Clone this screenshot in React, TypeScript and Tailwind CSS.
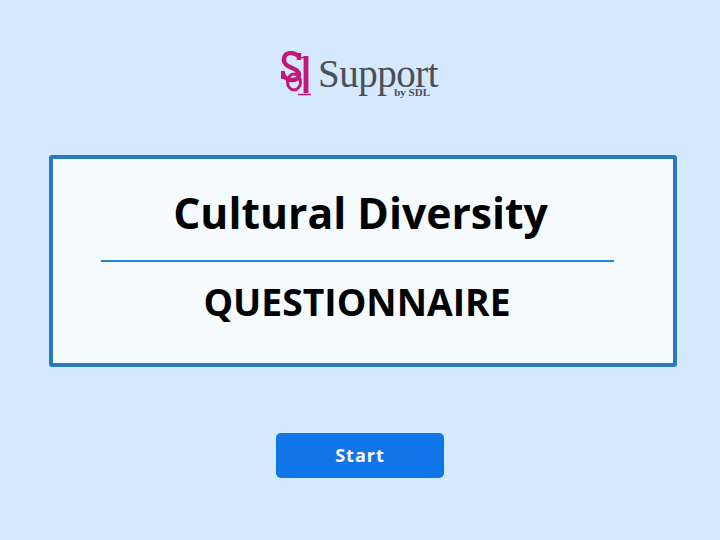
function Logo() {
  return (
    <div className="flex items-start h-[46px] w-[158px]" style={{fontFamily: '"Liberation Serif", serif'}}>
      <svg width="32" height="46" viewBox="0 0 32 46" className="shrink-0 text-[#c2187a]" fill="none" stroke="currentColor">
        <path d="M18 9 L18 2 M18 6 C14 1 4 0 3 8 C2 15 11 16 15 19 C20 23 19 29 11 29 C6 29 2 26 1.5 20 M1.5 28 L1.5 20" strokeWidth="4.4" />
        <ellipse cx="13" cy="31" rx="6.5" ry="8" strokeWidth="3" />
        <path d="M25 5 L25 42" strokeWidth="4.8" />
        <path d="M19 7 L25 6 M17 43.5 L30 43.5" strokeWidth="1.6" />
      </svg>
      <div className="flex flex-col items-end ml-[5px] text-[#4b4f57]">
        <span className="text-[39px] leading-[30px] tracking-[-0.5px] mt-[8px]">Support</span>
        <span className="text-[11px] leading-[10px] font-bold mt-[-2px] mr-[8px]">by SDL</span>
      </div>
    </div>
  );
}

export default function App() {
  return (
    <div
      className="w-[720px] h-[540px] bg-[#d4e8fe] flex flex-col items-center pt-[51px]"
      style={{fontFamily: '"Open Sans", sans-serif'}}
    >
      <Logo />
      <div className="mt-[58px] self-start ml-[49px] w-[628px] h-[212px] rounded-[3px] border-4 border-[#2a78c2] bg-[#f5fbff] flex flex-col items-center">
        <h1 className="mt-[27px] mr-[5px] text-[42.7px] leading-[54px] font-bold text-black">Cultural Diversity</h1>
        <div className="mt-[20px] self-start ml-[48px] w-[513px] h-[2px] bg-[#2a85d0]" />
        <p className="mt-[16px] mr-[12px] text-[37.3px] leading-[48px] font-bold text-black">QUESTIONNAIRE</p>
      </div>
      <button className="mt-[66px] w-[168px] h-[45px] rounded-[5px] bg-[#0f75e8] text-white text-[18px] font-bold tracking-[1px]">
        Start
      </button>
    </div>
  );
}
